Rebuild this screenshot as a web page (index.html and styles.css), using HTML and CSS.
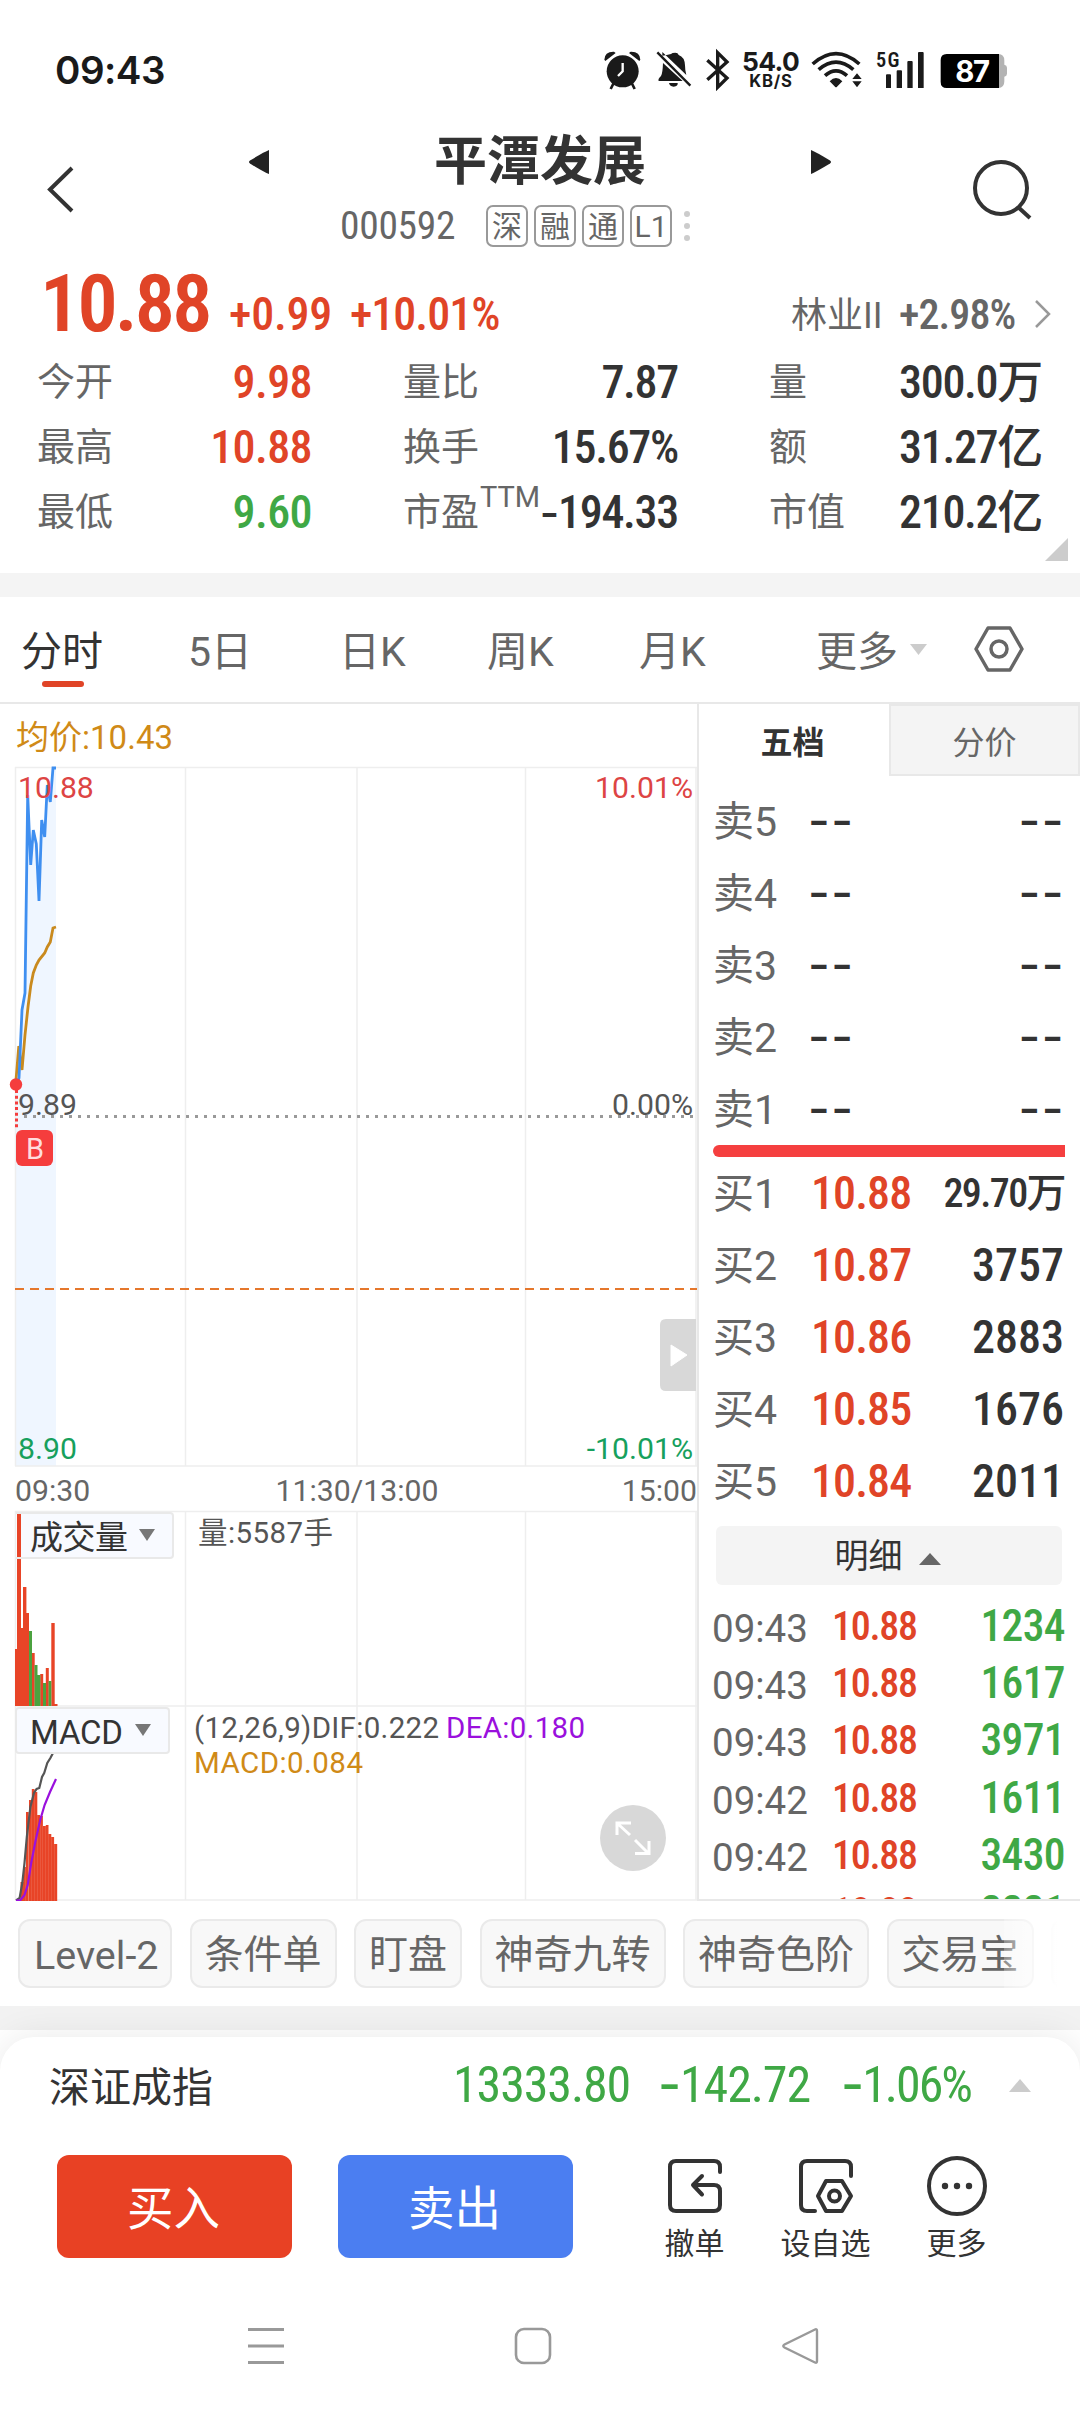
FILE: index.html
```html
<!DOCTYPE html>
<html lang="zh-CN">
<head>
<meta charset="utf-8">
<title>平潭发展 000592</title>
<link rel="stylesheet" href="styles.css">
</head>
<body>
<div class="screen">

<header class="status">
  <span class="clock">09:43</span>
  <svg class="status-icons" viewBox="0 0 1290 195" fill="#1a1a1a">
    <circle cx="98" cy="94" r="48"/>
    <path d="M43 59Q44 34 72 35L77 39L46 63ZM151 59Q150 34 122 35L117 39L148 63Z"/>
    <path d="M71 129L62 147M125 129l9 18" stroke="#1a1a1a" stroke-width="8"/>
    <path d="M98 69V94L84 108" fill="none" stroke="#fff" stroke-width="7"/>
    <path d="M217 47Q230 45 243 42Q246 38 256 38Q264 38 266 45Q284 51 285 76Q285 92 289 105L217 36ZM219 69L278 123H206Q203 117 213 108Q218 100 219 69ZM237 129H263Q265 138 251 140Q238 138 237 129Z"/>
    <path d="M202 37L301 137" stroke="#1a1a1a" stroke-width="7"/>
    <path d="M352 61L411 114L383 142V38L411 66L352 119" fill="none" stroke="#1a1a1a" stroke-width="10"/>
    <text class="st-speed" x="456" y="93" textLength="173">54.0</text>
    <text class="st-unit" x="478" y="140" textLength="128">KB/S</text>
    <g fill="none" stroke="#1a1a1a" stroke-width="11">
      <path d="M668 72Q738 10 808 72M686 89Q738 44 790 89M705 107Q738 78 771 107"/>
    </g>
    <path d="M719 124Q738 104 757 124L741 140Q738 143 735 140ZM787 117L801 100L815 117ZM787 124H815L801 142Z"/>
    <text class="st-net" x="858" y="80" textLength="70">5G</text>
    <path d="M888 106q0-3 3-3h9q3 0 3 3v38h-15ZM920 94q0-3 3-3h10q3 0 3 3v50h-16ZM952 66q0-3 3-3h10q3 0 3 3v78h-16ZM984 39q0-3 3-3h11q3 0 3 3v105h-17Z"/>
    <path d="M1210 42h15q18 0 18 20v12q8 2 8 9v18q0 7-8 9v14q0 20-18 20h-15Z" fill="#b3b3b3"/>
    <path d="M1070 42H1227V144H1070Q1052 144 1052 126V60Q1052 42 1070 42Z" fill="#000"/>
    <text class="st-batt" x="1096" y="127" textLength="104">87</text>
  </svg>
</header>

<section class="titlebar">
  <svg class="back" viewBox="0 0 32 50"><path d="M28 3L6 24.500L28 46" fill="none" stroke="#333" stroke-width="4"/></svg>
  <svg class="prev" viewBox="0 0 22 26"><path d="M21 1V25Q16 23 2 14.500Q0 13 2 11.500Q16 3 21 1Z" fill="#222"/></svg>
  <div class="name">
    <h1>平潭发展</h1>
    <div class="code-row">
      <span class="code">000592</span>
      <span class="tag">深</span><span class="tag">融</span><span class="tag">通</span><span class="tag">L1</span>
      <svg class="dots" viewBox="0 0 8 34" fill="#ccc"><circle cx="4" cy="5" r="3"/><circle cx="4" cy="17" r="3"/><circle cx="4" cy="29" r="3"/></svg>
    </div>
  </div>
  <svg class="next" viewBox="0 0 22 26"><path d="M1 1V25Q6 23 20 14.500Q22 13 20 11.500Q6 3 1 1Z" fill="#222"/></svg>
  <svg class="search" viewBox="0 0 62 62" fill="none" stroke="#333" stroke-width="4"><circle cx="28" cy="29" r="26"/><path d="M45 48L57 59"/></svg>
</section>

<section class="quote">
  <div class="headline">
    <span class="last red">10.88</span>
    <span class="chg red">+0.99</span>
    <span class="pct red">+10.01%</span>
    <span class="sector">林业II</span>
    <span class="sector-pct">+2.98%</span>
    <svg class="chev" viewBox="0 0 18 30"><path d="M2 2L15 15L2 28" fill="none" stroke="#999" stroke-width="2.500"/></svg>
  </div>
  <div class="stats">
    <div class="stat"><span>今开</span><b class="red">9.98</b></div>
    <div class="stat"><span>量比</span><b>7.87</b></div>
    <div class="stat"><span>量</span><b>300.0万</b></div>
    <div class="stat"><span>最高</span><b class="red">10.88</b></div>
    <div class="stat"><span>换手</span><b>15.67%</b></div>
    <div class="stat"><span>额</span><b>31.27亿</b></div>
    <div class="stat"><span>最低</span><b class="green">9.60</b></div>
    <div class="stat"><span>市盈<sup>TTM</sup></span><b><span class="neg">-</span>194.33</b></div>
    <div class="stat"><span>市值</span><b>210.2亿</b></div>
  </div>
  <i class="corner"></i>
</section>

<div class="band"></div>

<nav class="tabs">
  <span class="tab t1 on">分时</span>
  <span class="tab t2">5日</span>
  <span class="tab t3">日K</span>
  <span class="tab t4">周K</span>
  <span class="tab t5">月K</span>
  <span class="tab t6">更多</span>
  <svg class="more-tri" viewBox="0 0 17 12"><path d="M0 0H17L8.500 11Z" fill="#ccc"/></svg>
  <svg class="hex" viewBox="0 0 50 50" fill="none" stroke="#666" stroke-width="3.500" stroke-linejoin="round"><path d="M14 4H36L48 25L36 46H14L2 25Z"/><circle cx="25" cy="25" r="8"/></svg>
</nav>

<main class="trade">
  <svg class="chart" viewBox="0 704 697 1197">
    <path d="M16 1084L19 1078L22 1010L25 993L27.700 795L30.700 865L33.300 830L36.300 844L39 901L41.700 820L44.700 837L47.300 785L50.300 802L53 768H56V1466H16Z" fill="#eff6ff"/>
    <g stroke="#eee" stroke-width="1.500" fill="none">
      <path d="M15 767.500H697M15 1466H697M15 1511.500H697M15 1706H697M15 1900H697" />
      <path d="M15.500 767V1466M185.500 767V1466M357 767V1466M525.500 767V1466M696 767V1466M15.500 1511V1900M185.500 1511V1900M357 1511V1900M525.500 1511V1900M696 1511V1900"/>
    </g>
    <g class="vol" fill="#e84427">
      <path d="M15 1649h3V1706h-3ZM17 1513h4V1706h-4ZM20 1628h4V1706h-4ZM23 1587h3.400V1706H23ZM26 1613h3V1706h-3ZM31.700 1653h3V1706h-3ZM40.200 1674h3V1706h-3ZM45.800 1668h3V1706h-3ZM51.300 1623h3.400V1706h-3.400ZM54.500 1704h3V1706h-3Z"/>
      <path d="M29 1631h3V1706h-3ZM34.500 1665h3V1706h-3ZM37.400 1675h3V1706h-3ZM43 1683h3V1706h-3ZM48.600 1681h2.700V1706h-2.700Z" fill="#4ba23f"/>
    </g>
    <path d="M20.500 1882h2.700V1901h-2.700ZM23.200 1867h2.700V1901h-2.700ZM26 1812h2.700V1901H26ZM29 1800h2.700V1901H29ZM31.800 1789h2.700V1901h-2.700ZM34.600 1792h2.700V1901h-2.700ZM37.400 1815h2.700V1901h-2.700ZM40.200 1816h2.700V1901h-2.700ZM43 1826h2.700V1901H43ZM45.800 1825h2.700V1901h-2.700ZM48.600 1834h2.700V1901h-2.700ZM51.400 1837h2.700V1901h-2.700ZM54.200 1844h3V1901h-3Z" fill="#e84427"/>
    <path d="M16 1900.500L19.600 1898L22.300 1883L24.500 1863L26.800 1837L30.400 1807L34 1793L36.600 1789L39.300 1788L42 1777L44.200 1773L47.300 1763L50.400 1758L53 1753L56 1746" fill="none" stroke="#555" stroke-width="2.200"/>
    <path d="M16 1900.500L20.500 1900L24.500 1895L27.700 1885L31.200 1863L35.700 1840L40.200 1820L44.600 1805L50 1792L56 1779" fill="none" stroke="#9a10dd" stroke-width="2.200"/>

    <path d="M16 1080L18.800 1046L22 1070L25 1035L28 1007L30.700 986L33.300 973L36.300 965L39 960L44.700 953L47.300 947L50.300 942L53 928L56 927" fill="none" stroke="#c98a1e" stroke-width="2.800"/>
    <path d="M16 1086L19 1078L22 1010L25 993L27.700 795L30.700 865L33.300 830L36.300 844L39 901L41.700 820L44.700 837L47.300 785L50.300 802L53 768H56" fill="none" stroke="#3f8ff0" stroke-width="2.800"/>
    <path d="M24 1116.500H696" stroke="#999" stroke-width="3" stroke-dasharray="3 6"/>
    <path d="M15 1289H697" stroke="#e5772c" stroke-width="2.200" stroke-dasharray="9 6"/>
    <path d="M16.500 1090V1130" stroke="#f53d3d" stroke-width="3" stroke-dasharray="3 2.700"/>
    <circle cx="16" cy="1084.500" r="6.200" fill="#f53d3d"/>
    <rect x="16" y="1130" width="37" height="36" rx="6" fill="#f53d3d"/>
    <text x="26" y="1159" class="c-b">B</text>

    <text x="16" y="748.500" class="c-avg" textLength="157">均价:10.43</text>
    <text x="18" y="797.500" class="c-lab" fill="#dd4444">10.88</text>
    <text x="693" y="797.500" class="c-lab end" fill="#dd4444">10.01%</text>
    <text x="18" y="1114.500" class="c-lab" fill="#555">9.89</text>
    <text x="693" y="1114.500" class="c-lab end" fill="#555">0.00%</text>
    <text x="18" y="1458.500" class="c-lab" fill="#17a05d">8.90</text>
    <text x="693" y="1458.500" class="c-lab end" fill="#17a05d">-10.01%</text>
    <text x="15" y="1500.500" class="c-lab" fill="#666">09:30</text>
    <text x="357" y="1500.500" class="c-lab mid" fill="#666">11:30/13:00</text>
    <text x="697" y="1500.500" class="c-lab end" fill="#666">15:00</text>

    <path d="M660 1385V1325Q660 1319 666 1319H696V1391H666Q660 1391 660 1385Z" fill="#d8d8d8"/>
    <path d="M671 1345L687 1355L671 1366Z" fill="#fff" stroke="#fff" stroke-linejoin="round"/>

    <path d="M21 1513H170Q173 1513 173 1516V1555Q173 1558 170 1558H21Z" fill="#f8faff"/>
    <path d="M16 1513H170Q173 1513 173 1516V1555Q173 1558 170 1558H16" fill="none" stroke="#e9e9e9" stroke-width="2"/>
    <text x="30" y="1548.500" class="c-box" textLength="98">成交量</text>
    <path d="M139 1529H155L147 1541Z" fill="#777"/>
    <text x="198" y="1543" class="c-ind" fill="#555" textLength="135">量:5587手</text>

    <rect x="16" y="1708" width="153" height="45" rx="3" fill="#f8faff" stroke="#e9e9e9" stroke-width="2"/>
    <text x="30" y="1743.500" class="c-box" textLength="93">MACD</text>
    <path d="M135 1724H151L143 1736Z" fill="#777"/>
    <text x="194" y="1738" class="c-ind" fill="#555" textLength="245">(12,26,9)DIF:0.222</text>
    <text x="446" y="1738" class="c-ind" fill="#9a10dd" textLength="139">DEA:0.180</text>
    <text x="194" y="1773" class="c-ind" fill="#d08a17" textLength="169">MACD:0.084</text>
    <circle cx="633" cy="1838" r="33" fill="#d8d8d8"/>
    <path d="M617 1835V1823H631M618 1824L630 1835M635 1840L648 1853M649 1841V1853.500H635" fill="none" stroke="#fff" stroke-width="3"/>
  </svg>

  <aside class="book">
    <div class="book-tabs"><span class="bt on">五档</span><span class="bt off">分价</span></div>
    <div class="levels">
      <div class="lv"><span>卖5</span><i>--</i><i>--</i></div>
      <div class="lv"><span>卖4</span><i>--</i><i>--</i></div>
      <div class="lv"><span>卖3</span><i>--</i><i>--</i></div>
      <div class="lv"><span>卖2</span><i>--</i><i>--</i></div>
      <div class="lv"><span>卖1</span><i>--</i><i>--</i></div>
    </div>
    <div class="ratio"></div>
    <div class="levels">
      <div class="lv"><span>买1</span><b class="red">10.88</b><b class="wan">29.70万</b></div>
      <div class="lv"><span>买2</span><b class="red">10.87</b><b>3757</b></div>
      <div class="lv"><span>买3</span><b class="red">10.86</b><b>2883</b></div>
      <div class="lv"><span>买4</span><b class="red">10.85</b><b>1676</b></div>
      <div class="lv"><span>买5</span><b class="red">10.84</b><b>2011</b></div>
    </div>
    <div class="detail-btn">明细<svg viewBox="0 0 22 12"><path d="M0 12L11 0L22 12Z" fill="#666"/></svg></div>
    <div class="ticks">
      <div class="tick"><span>09:43</span><b class="red">10.88</b><b class="green">1234</b></div>
      <div class="tick"><span>09:43</span><b class="red">10.88</b><b class="green">1617</b></div>
      <div class="tick"><span>09:43</span><b class="red">10.88</b><b class="green">3971</b></div>
      <div class="tick"><span>09:42</span><b class="red">10.88</b><b class="green">1611</b></div>
      <div class="tick"><span>09:42</span><b class="red">10.88</b><b class="green">3430</b></div>
      <div class="tick"><span>09:42</span><b class="red">10.88</b><b class="green">2221</b></div>
    </div>
  </aside>
</main>

<section class="chips">
  <span class="chip">Level-2</span><span class="chip">条件单</span><span class="chip">盯盘</span><span class="chip">神奇九转</span><span class="chip">神奇色阶</span><span class="chip">交易宝</span><span class="chip last-chip"></span>
  <i class="fade"></i>
</section>

<div class="gap-band"></div>

<footer class="sheet">
  <div class="index">
    <span class="idx-name">深证成指</span>
    <span class="idx v1">13333.80</span>
    <span class="idx v2"><span class="neg">-</span>142.72</span>
    <span class="idx v3"><span class="neg">-</span>1.06%</span>
    <svg class="idx-tri" viewBox="0 0 22 13"><path d="M0 13L11 0L22 13Z" fill="#ccc"/></svg>
  </div>
  <div class="actions">
    <button class="btn buy">买入</button>
    <button class="btn sell">卖出</button>
    <div class="act a1">
      <svg viewBox="0 0 60 60" fill="none" stroke="#333" stroke-width="4" stroke-linecap="round" stroke-linejoin="round"><path d="M55 16V11Q55 5 49 5H11Q5 5 5 11V49Q5 55 11 55H49Q55 55 55 49V35Q55 29 49 29H28M37 20L28 29L37 38.500"/></svg>
      <span>撤单</span>
    </div>
    <div class="act a2">
      <svg viewBox="0 0 60 60" fill="none" stroke="#333" stroke-width="4" stroke-linecap="round" stroke-linejoin="round"><path d="M55 20V11Q55 5 49 5H11Q5 5 5 11V49Q5 55 11 55H19M30 25H46L55 40L46 55H30L22 40Z"/><circle cx="38.500" cy="40" r="5.500"/></svg>
      <span>设自选</span>
    </div>
    <div class="act a3">
      <svg viewBox="0 0 60 60" fill="none" stroke="#333" stroke-width="4"><circle cx="30" cy="30" r="28"/><g fill="#333" stroke="none"><circle cx="18" cy="30" r="3.200"/><circle cx="30" cy="30" r="3.200"/><circle cx="42" cy="30" r="3.200"/></g></svg>
      <span>更多</span>
    </div>
  </div>
  <div class="sysnav">
    <svg viewBox="0 0 40 40"><path d="M2 3.500H38M2 20H38M2 36.500H38" stroke="#999" stroke-width="3"/></svg>
    <svg viewBox="0 0 40 40"><rect x="3" y="3" width="34" height="34" rx="8" fill="none" stroke="#999" stroke-width="2.600"/></svg>
    <svg viewBox="0 0 40 40"><path d="M35 3.500Q37 2.500 37 5V35Q37 37.500 35 36.500L4.500 21.500Q2 20 4.500 18.500Z" fill="none" stroke="#999" stroke-width="2.400"/></svg>
  </div>
</footer>

</div>
</body>
</html>
```
FILE: styles.css
```css
* { box-sizing: border-box; }
body {
  margin: 0;
  background: #fff;
  color: #333;
  font-family: Roboto, "Noto Sans CJK SC", sans-serif;
  font-weight: 400;
}
.screen { width: 1080px; height: 2412px; overflow: hidden; display: flex; flex-direction: column; }
svg { display: block; flex: none; }
i { font-style: normal; }
.red { color: #e04427; }
.green { color: #3fa845; }

/* Status bar */
.status { height: 105px; padding: 40px 60px 0 55px; display: flex; justify-content: space-between; }
.clock { font: 600 38.500px/60px Inter, sans-serif; color: #1a1a1a; letter-spacing: -.5px; }
.status-icons { width: 430px; height: 65px; }
.st-speed { font: 650 79px Inter, sans-serif; }
.st-unit { font: 650 50px Inter, sans-serif; }
.st-net { font: 600 61px "Roboto Condensed", sans-serif; }
.st-batt { font: 700 88px Inter, sans-serif; fill: #fff; }

/* Title */
.titlebar { height: 155px; display: flex; align-items: flex-start; }
.back { width: 32px; height: 50px; margin: 60px 0 0 44px; }
.prev { width: 22px; height: 26px; margin: 44px 0 0 172px; }
.name { width: 540px; display: flex; flex-direction: column; align-items: center; }
.name h1 { margin: 23px 0 0; font-size: 53px; line-height: 68px; font-weight: 700; }
.code-row { display: flex; align-items: center; gap: 6px; height: 42px; margin-top: 9px; width: 400px; }
.code { width: 140px; font: 400 39.500px/42px "Roboto Condensed", sans-serif; color: #666; letter-spacing: -.3px; }
.tag { flex: none; width: 42px; height: 42px; border: 2px solid #999; border-radius: 7px; font-size: 30px; line-height: 39px; text-align: center; color: #666; }
.dots { width: 8px; height: 34px; margin-left: 5px; }
.next { width: 22px; height: 26px; margin-top: 44px; }
.search { width: 62px; height: 62px; margin: 54px 0 0 141px; }

/* Quote */
.quote { height: 313px; position: relative; padding-left: 37px; }
.headline { display: flex; height: 90px; margin-left: 3px; font-family: "Roboto Condensed", "Noto Sans CJK SC", sans-serif; white-space: nowrap; }
.last { width: 189px; font-size: 80px; font-weight: 600; line-height: 89px; letter-spacing: -2.800px; }
.chg { width: 121px; font-size: 46px; font-weight: 500; line-height: 109px; letter-spacing: -.2px; }
.pct { width: 441px; font-size: 46px; font-weight: 500; line-height: 109px; letter-spacing: -1px; }
.sector { width: 108px; font-size: 36px; line-height: 112px; color: #666; font-family: Roboto, "Noto Sans CJK SC", sans-serif; }
.sector-pct { font-size: 42px; font-weight: 500; line-height: 109px; color: #666; width: 135px; letter-spacing: -.9px; }
.chev { width: 18px; height: 30px; margin-top: 39px; }
.stats { display: grid; grid-template-columns: 275px 275px 273px; column-gap: 91px; grid-auto-rows: 65px; margin-top: 0; }
.stat { display: flex; justify-content: space-between; line-height: 65px; white-space: nowrap; }
.stat > span { font-size: 38px; color: #666; display: flex; }
.stat b { font: 500 46px/65px "Roboto Condensed", "Noto Sans CJK SC", sans-serif; letter-spacing: -.6px; margin-left: -20px; }
.stat b:not(.red):not(.green) { color: #333; letter-spacing: -1.300px; }
.stat sup { font-size: 29px; line-height: 35px; vertical-align: baseline; margin-left: 1px; }
.neg { display: inline-block; line-height: 1; font-family: Inter, sans-serif; }
.stat .neg { font-size: 42px; }
.corner { position: absolute; right: 12px; bottom: 12px; width: 23px; height: 23px; background: #ccc; clip-path: polygon(100% 0, 100% 100%, 0 100%); }
.band { height: 24px; background: #f4f4f4; }

/* Period tabs */
.tabs { height: 107px; border-bottom: 2px solid #e8e8e8; display: flex; padding-left: 21px; font-size: 41px; line-height: 110px; color: #666; }
.tab { flex: none; }
.t1 { width: 167px; color: #333; position: relative; }
.t1::after { content: ""; position: absolute; left: 21px; top: 84px; width: 42px; height: 6px; border-radius: 3px; background: #e04427; }
.t2 { width: 151px; } .t3 { width: 148px; } .t4 { width: 152px; } .t5 { width: 177px; } .t6 { width: 94px; }
.more-tri { width: 17px; height: 12px; margin-top: 47px; }
.hex { width: 50px; height: 50px; margin: 27px 0 0 47px; }

/* Chart and order book */
.trade { display: flex; height: 1197px; }
.chart { width: 697px; height: 1197px; }
.c-lab { font-size: 30.200px; }
.c-avg { font-size: 33px; fill: #d08a17; }
.c-box { font-size: 33px; fill: #333; }
.c-ind { font-size: 29.500px; }
.c-b { font-size: 29px; fill: #fdd; }
.end { text-anchor: end; }
.mid { text-anchor: middle; }

.book { width: 383px; border-left: 2px solid #e8e8e8; border-bottom: 2px solid #e8e8e8; overflow: hidden; }
.book-tabs { display: flex; height: 72px; margin-bottom: 9px; font-size: 32px; line-height: 78px; text-align: center; }
.bt.on { width: 190px; font-weight: 700; padding-right: 3px; }
.bt.off { flex: 1; background: #f4f4f4; border: 2px solid #e8e8e8; color: #666; line-height: 74px; }
.lv { display: flex; height: 72px; line-height: 74px; padding: 0 16px 0 14px; white-space: nowrap; }
.lv span { font-size: 41px; width: 98px; color: #666; }
.lv b { font: 500 46px/73px "Roboto Condensed", "Noto Sans CJK SC", sans-serif; }
.lv b:last-child { margin-left: auto; }
.lv .red { letter-spacing: -.9px; }
.lv .wan { font-size: 40px; letter-spacing: -1.600px; margin-right: -1px; }
.lv i { font: 450 47px/69px Inter, sans-serif; letter-spacing: 1.500px; margin-left: -3px; }
.lv i:last-child { margin-left: auto; margin-right: -1px; }
.ratio { height: 12px; margin: 0 15px 0 14px; background: #f53f3f; border-radius: 6px 0 0 6px; }
.detail-btn { height: 59px; margin: 9px 18px 13px 17px; background: #f4f4f4; border-radius: 6px; display: flex; align-items: center; justify-content: center; gap: 16px; padding-right: 3px; font-size: 34px; line-height: 60px; }
.detail-btn svg { width: 22px; height: 12px; margin-top: 6px; }
.tick { display: flex; height: 57.200px; line-height: 61px; padding: 0 15px 0 13px; }
.tick span { font-size: 38.500px; width: 120px; color: #666; }
.tick b { font: 500 40px/57px "Roboto Condensed", sans-serif; letter-spacing: -1.300px; }
.tick .green { font-size: 43.500px; line-height: 57px; letter-spacing: -.6px; margin-left: auto; }

/* Shortcut chips */
.chips { height: 105px; padding: 18px 0 0 18px; display: flex; gap: 17.500px; position: relative; overflow: hidden; }
.chip { flex: none; height: 69px; padding: 0 13px; border: 2px solid #eaeaea; border-radius: 12px; background: #f8f8f8; font-size: 39px; line-height: 69px; color: #666; }
.chip:first-child { padding: 0 14px; width: 154px; font-size: 39.500px; white-space: nowrap; }
.last-chip { width: 90px; }
.fade { position: absolute; right: 0; top: 0; width: 76px; height: 100%; background: linear-gradient(90deg, rgba(255,255,255,.25), #fff 72%); }
.gap-band { height: 24px; background: #f2f2f2; }

/* Bottom sheet */
.sheet { margin-top: 7px; height: 375px; background: #fff; border-radius: 34px 34px 0 0; box-shadow: 0 0 36px rgba(0,0,0,.09); display: flex; flex-direction: column; }
.index { height: 118px; padding-left: 49px; display: flex; line-height: 102px; white-space: nowrap; }
.idx-name { font-size: 41px; width: 404px; }
.idx { font: 450 50px/97px "Roboto Condensed", sans-serif; color: #3fa845; letter-spacing: -1.100px; }
.v1 { width: 205px; } .v2 { width: 183px; } .v3 { width: 168px; }
.v3 { letter-spacing: -2px; }
.idx-tri { width: 22px; height: 13px; margin-top: 42px; }
.actions { height: 104px; display: flex; padding-left: 57px; }
.btn { width: 235px; height: 103px; margin: 0 46px 0 0; padding: 0 2px 0 0; border: 0; border-radius: 12px; color: #fff; font: 400 46.500px/108px Roboto, "Noto Sans CJK SC", sans-serif; }
.buy { background: #e84124; }
.sell { background: #4b7ef1; }
.act { display: flex; flex-direction: column; align-items: center; width: 131px; }
.a1 { margin-left: 10px; }
.act svg { width: 60px; height: 60px; margin-top: 1px; }
.act span { font-size: 30px; line-height: 40px; margin-top: 8px; }
.sysnav { display: flex; padding: 67px 0 0 246px; gap: 227px; }
.sysnav svg { width: 40px; height: 40px; }
```
